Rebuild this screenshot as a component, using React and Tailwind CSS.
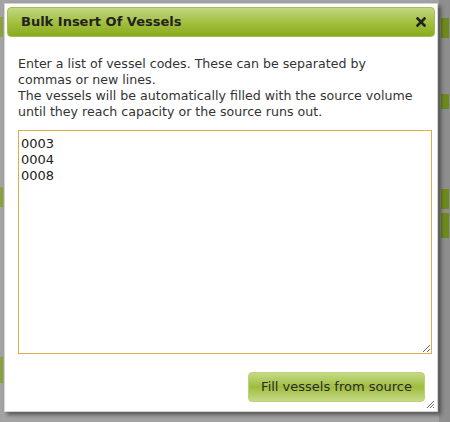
export default function App() {
  const font = { fontFamily: '"DejaVu Sans", Verdana, sans-serif' };
  return (
    <div className="w-[450px] h-[422px] overflow-hidden bg-[#a3a3a3] flex" style={font}>
      <div className="w-[4px] flex flex-col pt-[17px] gap-[150px]">
        <div className="w-[3px] h-[20px] bg-[#8aa23a]" />
        <div className="w-[3px] h-[20px] bg-[#8aa23a]" />
        <div className="w-[3px] h-[26px] bg-[#8aa23a]" />
      </div>
      <div className="mt-[3px] w-[434px] h-[409px] bg-white border border-[#d4d4d4] shadow-[3px_3px_4px_rgba(0,0,0,0.45)] flex flex-col relative">
        <div className="mx-[2px] mt-[3px] h-[30px] rounded-[4px] border border-[#a6bf55] bg-gradient-to-b from-[#c3d682] via-[#a4c03f] to-[#8aab1c] flex items-center justify-between pl-[13px] pr-[8px]">
          <span className="text-[13px] font-bold text-[#222]">Bulk Insert Of Vessels</span>
          <svg width="10" height="10" viewBox="0 0 10 10">
            <path d="M1.5 1.5 L8.5 8.5 M8.5 1.5 L1.5 8.5" stroke="#222" strokeWidth="2.6" strokeLinecap="square" />
          </svg>
        </div>
        <div className="ml-[13px] w-[400px] pt-[19px] text-[12.6px] leading-[16px] text-[#333]">
          <p>Enter a list of vessel codes. These can be separated by commas or new lines.</p>
          <p>The vessels will be automatically filled with the source volume until they reach capacity or the source runs out.</p>
        </div>
        <textarea
          className="mt-[10px] ml-[13px] w-[414px] h-[224px] border border-[#e0ac4c] outline-none px-[2px] pt-[5px] text-[13px] leading-[16px] text-[#222] resize"
          style={font}
          defaultValue={"0003\n0004\n0008"}
        />
        <div className="flex justify-end pr-[12px] mt-[18px]">
          <button
            className="w-[177px] h-[30px] rounded-[4px] border border-[#bcd27a] bg-gradient-to-b from-[#c5da85] via-[#9fbd3a] to-[#c5da85] text-[13px] text-[#2a2a2a]"
            style={font}
          >
            Fill vessels from source
          </button>
        </div>
        <svg className="absolute right-[2px] bottom-[2px]" width="10" height="10" viewBox="0 0 10 10">
          <path d="M9 2 L2 9 M9 5 L5 9 M9 8 L8 9" stroke="#666" strokeWidth="1" />
        </svg>
      </div>
      <div className="ml-[1px] flex-1 flex flex-col items-end">
        <div className="w-[11px] h-full bg-[#8e8e8e] flex flex-col pt-[18px] gap-[4px] items-center">
          <div className="w-[8px] h-[20px] bg-[#6f8a1c]" />
          <div className="w-[8px] h-[15px] mt-[52px] bg-[#6f8a1c]" />
          <div className="w-[8px] h-[20px] mt-[76px] bg-[#6f8a1c]" />
          <div className="w-[8px] h-[25px] bg-[#6f8a1c]" />
        </div>
      </div>
    </div>
  );
}
